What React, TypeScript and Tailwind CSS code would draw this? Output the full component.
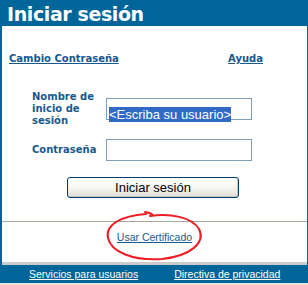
import React from "react"

const verdana = { fontFamily: '"DejaVu Sans", Verdana, sans-serif' }
const arial = { fontFamily: '"Liberation Sans", Arial, sans-serif' }

export default function App() {
  return (
    <div className="relative w-[308px] h-[285px] bg-white overflow-hidden">
      {/* Cabecera */}
      <div
        className="h-[26px] bg-[#006699] pl-[7px] pt-[2px] text-white font-bold text-[19px] leading-[24px] tracking-[-0.4px]"
        style={verdana}
      >
        Iniciar sesión
      </div>

      {/* Cuerpo */}
      <div className="border-l-2 border-r border-[#006699] flex flex-col">
        <div
          className="pt-[27px] pl-[7px] pr-[44px] flex justify-between text-[10px] leading-[12px] font-bold text-[#15598f]"
          style={verdana}
        >
          <a href="#" className="underline">Cambio Contraseña</a>
          <a href="#" className="underline">Ayuda</a>
        </div>

        <div className="mt-[26px] ml-[30px] grid grid-cols-[74px_146px] gap-y-[12px] items-center">
          <label
            className="w-[70px] text-[10px] leading-[12px] font-bold text-[#15598f]"
            style={verdana}
          >
            Nombre de inicio de sesión
          </label>
          <div className="h-[22px] border border-[#7f9db9] bg-white pl-[2px] pt-[2px]">
            <span className="bg-[#316ac5] text-white text-[13px] leading-[15px] inline-block" style={arial}>
              &lt;Escriba su usuario&gt;
            </span>
          </div>
          <label
            className="text-[10px] leading-[12px] font-bold text-[#15598f]"
            style={verdana}
          >
            Contraseña
          </label>
          <div className="h-[22px] border border-[#7f9db9] bg-white" />
        </div>

        <button
          className="mt-[16px] ml-[65px] w-[172px] h-[21px] rounded-[3px] border border-[#003c74] bg-gradient-to-b from-white via-[#f6f6f2] to-[#dedcd2] text-black text-[13px] leading-[19px] shadow-[inset_-1px_-1px_0_#c9c7bb]"
          style={arial}
        >
          Iniciar sesión
        </button>

        <div className="mt-[23px] h-px bg-[#aca899]" />

        <div className="mt-[9px] text-center text-[10.5px] leading-[12px]" style={arial}>
          <a href="#" className="underline text-[#15598f]">Usar Certificado</a>
        </div>

        <div className="mt-[19px] h-[3px] bg-[#cccccc]" />
      </div>

      {/* Pie */}
      <div
        className="h-[18px] bg-[#006699] pl-[29px] pt-[3px] flex gap-[36px] text-white text-[10.5px] leading-[12px]"
        style={arial}
      >
        <a href="#" className="underline">Servicios para usuarios</a>
        <a href="#" className="underline">Directiva de privacidad</a>
      </div>
      <div className="h-[2px] bg-[#e6e6e6]" />

      {/* Marca roja a mano */}
      <svg className="absolute inset-0 pointer-events-none" width="308" height="285" viewBox="0 0 308 285">
        <path
          d="M145 212 C152 213 155 216 150 216 C170 213 192 217 199 229 C206 243 190 256 162 259 C133 261 111 252 108 238 C105 224 122 216 146 214"
          fill="none"
          stroke="#ee1c24"
          strokeWidth="2"
          strokeLinecap="round"
          strokeLinejoin="round"
        />
      </svg>
    </div>
  )
}
